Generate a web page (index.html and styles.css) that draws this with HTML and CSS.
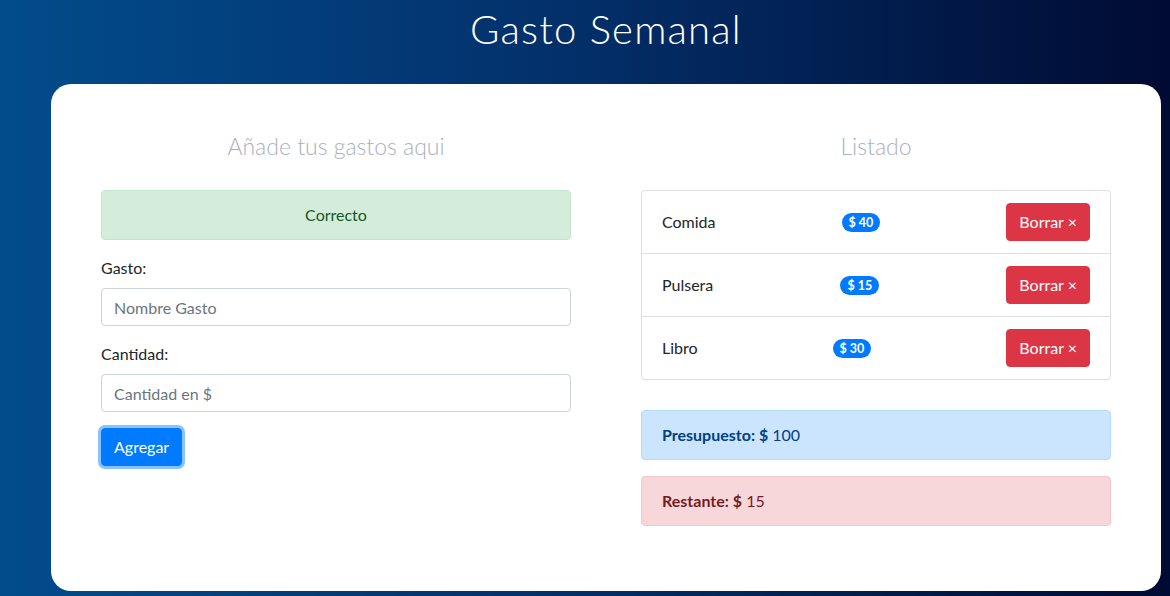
FILE: index.html
```html
<!DOCTYPE html>
<html lang="es">
<head>
<meta charset="utf-8">
<title>Gasto Semanal</title>
<link rel="stylesheet" href="styles.css">
</head>
<body>
<header class="top">
  <h1 class="title">Gasto Semanal</h1>
</header>
<main class="card">
  <section class="col">
    <h2 class="col-title">Añade tus gastos aqui</h2>
    <div class="alert alert-success centered">Correcto</div>
    <form class="form">
      <div class="form-group">
        <label class="label">Gasto:</label>
        <input class="input" type="text" placeholder="Nombre Gasto">
      </div>
      <div class="form-group">
        <label class="label">Cantidad:</label>
        <input class="input" type="text" placeholder="Cantidad en $">
      </div>
      <button class="btn btn-primary focused" type="button">Agregar</button>
    </form>
  </section>
  <section class="col">
    <h2 class="col-title">Listado</h2>
    <ul class="list">
      <li class="list-item"><span class="name">Comida</span><span class="badge">$ 40</span><button class="btn btn-danger" type="button">Borrar &times;</button></li>
      <li class="list-item"><span class="name">Pulsera</span><span class="badge">$ 15</span><button class="btn btn-danger" type="button">Borrar &times;</button></li>
      <li class="list-item"><span class="name">Libro</span><span class="badge">$ 30</span><button class="btn btn-danger" type="button">Borrar &times;</button></li>
    </ul>
    <div class="alert alert-primary"><strong>Presupuesto: $</strong> 100</div>
    <div class="alert alert-danger"><strong>Restante: $</strong> 15</div>
  </section>
</main>
</body>
</html>
```
FILE: styles.css
```css
* { box-sizing: border-box; }
html, body { height: 100%; }
body {
  margin: 0;
  min-height: 596px;
  background: linear-gradient(to right, #024c8c 0%, #03326d 45%, #000b33 100%);
  font-family: "Lato", "Noto Sans", sans-serif;
  font-size: 16px;
  line-height: 24px;
  color: #212529;
  overflow: hidden;
}
.top {
  padding-top: 5px;
  padding-left: 51px;
  width: 1161px;
}
.title {
  margin: 0 0 31px;
  text-align: center;
  font-family: "Lato", sans-serif;
  font-weight: 300;
  font-size: 40px;
  line-height: 48px;
  letter-spacing: 1.2px;
  color: #ffffff;
}
.card {
  margin-left: 51px;
  width: 1110px;
  background: #fff;
  border-radius: 20px;
  padding: 48px 50px 49px;
  display: grid;
  grid-template-columns: 470px 470px;
  column-gap: 70px;
  align-items: start;
}
.col-title {
  margin: 0 0 29px;
  text-align: center;
  font-family: "Lato", sans-serif;
  font-weight: 300;
  font-size: 23px;
  line-height: 29px;
  letter-spacing: 0;
  color: #aab0c0;
}
.alert {
  padding: 12px 20px;
  border: 1px solid transparent;
  border-radius: 4px;
  margin-bottom: 16px;
}
.alert strong { font-weight: 700; }
.centered { text-align: center; }
.alert-success { background: #d4edda; border-color: #c3e6cb; color: #155724; }
.alert-primary { background: #cce5ff; border-color: #b8daff; color: #004085; }
.alert-danger { background: #f8d7da; border-color: #f5c6cb; color: #721c24; }
.form { margin: 0; }
.form-group { margin-bottom: 16px; }
.label { display: block; margin-bottom: 8px; }
.input {
  display: block;
  width: 100%;
  height: 38px;
  padding: 6px 12px;
  font-family: inherit;
  font-size: 16px;
  line-height: 24px;
  color: #495057;
  background: #fff;
  border: 1px solid #ced4da;
  border-radius: 4px;
}
.input::placeholder { color: #6c757d; }
.btn {
  display: inline-block;
  height: 38px;
  padding: 6px 12px;
  font-family: inherit;
  font-size: 16px;
  line-height: 24px;
  border: 1px solid transparent;
  border-radius: 4px;
  color: #fff;
  cursor: pointer;
}
.btn-primary { background: #007bff; border-color: #007bff; }
.btn-primary.focused { box-shadow: 0 0 0 3px rgba(38, 143, 255, 0.55); }
.btn-danger { background: #dc3545; border-color: #dc3545; }
.list {
  list-style: none;
  margin: 0 0 30px;
  padding: 0;
  border: 1px solid rgba(0, 0, 0, 0.125);
  border-radius: 4px;
}
.list-item {
  display: flex;
  align-items: center;
  justify-content: space-between;
  padding: 12px 20px;
  border-bottom: 1px solid rgba(0, 0, 0, 0.125);
}
.list-item:last-child { border-bottom: 0; }
.badge {
  display: inline-block;
  background: #007bff;
  color: #fff;
  font-size: 12.5px;
  font-weight: 700;
  line-height: 13px;
  padding: 3px 7px;
  border-radius: 10px;
}
```
